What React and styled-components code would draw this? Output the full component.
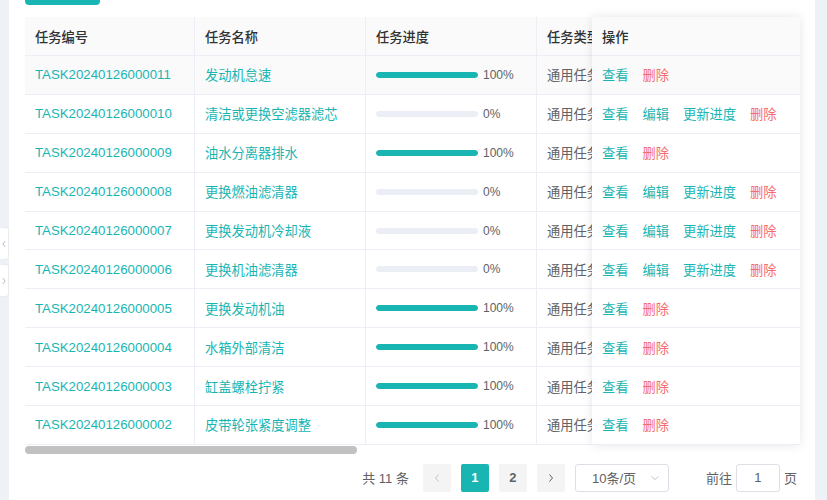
import React from "react";
import styled, { createGlobalStyle } from "styled-components";

const GlobalStyle = createGlobalStyle`
  html, body {
    margin: 0;
    padding: 0;
    background: #eef1f6;
    overflow: hidden;
  }
  body {
    font-family: "Liberation Sans", "Noto Sans CJK SC", sans-serif;
    font-size: 13.25px;
    color: #606266;
  }
`;

const TEAL = "#19b5b3";
const RED = "#f56c6c";
const LINE = "#ebeef5";

const Page = styled.div`
  position: relative;
  height: 500px;
  overflow: hidden;
  padding: 0 12px 0 9px;
`;

const Card = styled.div`
  background: #fff;
  height: 500px;
  padding: 0 15px 0 16px;
  box-sizing: border-box;
  display: flow-root;
  overflow: hidden;
`;

const TopButton = styled.div`
  width: 75px;
  height: 32px;
  margin-top: -27px;
  border-radius: 4px;
  background: ${TEAL};
`;

const TableBox = styled.div`
  margin-top: 12px;
  display: flex;
`;

const ScrollArea = styled.div`
  width: 567px;
  overflow: hidden;
  display: flex;
  flex-direction: column;
`;

const Grid = styled.div`
  width: 760px;
`;

const Row = styled.div`
  display: grid;
  grid-template-columns: ${(p) => p.$cols};
  height: ${(p) => (p.$head ? "39px" : "38.9px")};
  background: ${(p) => (p.$head || p.$hover ? "#fafafa" : "#fff")};
  border-bottom: 1px solid ${LINE};
  box-sizing: border-box;
`;

const Cell = styled.div`
  display: flex;
  align-items: center;
  padding: 0 10px;
  gap: ${(p) => p.$gap || 0}px;
  border-right: ${(p) => (p.$noBorder ? "none" : `1px solid ${LINE}`)};
  white-space: nowrap;
  overflow: hidden;
  color: ${(p) => (p.$head ? "#303133" : p.$teal ? TEAL : "#606266")};
  font-weight: ${(p) => (p.$head ? 500 : 400)};
`;

const ScrollBar = styled.div`
  height: 10px;
  padding: 1px 0;
  box-sizing: border-box;
  background: #fff;
`;

const Thumb = styled.div`
  width: 332px;
  height: 8px;
  border-radius: 4px;
  background: #c1c1c1;
`;

const Fixed = styled.div`
  width: 208px;
  align-self: flex-start;
  background: #fff;
  box-shadow: 0 0 10px rgba(0, 0, 0, 0.1);
  position: relative;
  z-index: 1;
`;

const Bar = styled.div`
  width: 102px;
  height: 6px;
  border-radius: 3px;
  background: #ebeef5;
  overflow: hidden;
`;

const Fill = styled.div`
  height: 100%;
  border-radius: 3px;
  background: ${TEAL};
`;

const Pct = styled.span`
  font-size: 12px;
  color: #606266;
`;

const Link = styled.span`
  color: ${(p) => (p.$danger ? RED : TEAL)};
  cursor: pointer;
`;

const Pager = styled.div`
  display: flex;
  justify-content: flex-end;
  align-items: center;
  margin-top: 9px;
  padding-right: 3px;
  height: 28px;
  font-size: 13px;
  color: #606266;
`;

const Total = styled.span`
  margin-right: 9px;
`;

const PageBtn = styled.div`
  width: 28px;
  height: 28px;
  margin: 0 5px;
  border-radius: 2px;
  display: flex;
  align-items: center;
  justify-content: center;
  font-weight: 700;
  font-size: 13px;
  background: ${(p) => (p.$active ? TEAL : "#f4f4f5")};
  color: ${(p) => (p.$active ? "#fff" : p.$disabled ? "#c0c4cc" : "#606266")};
`;

const Select = styled.div`
  width: 94px;
  height: 28px;
  margin-left: 5px;
  box-sizing: border-box;
  border: 1px solid #dcdfe6;
  border-radius: 3px;
  display: flex;
  align-items: center;
  padding: 0 8px 0 16px;
  justify-content: space-between;
  color: #606266;
`;

const Jump = styled.div`
  display: flex;
  align-items: center;
  margin-left: 37px;
  gap: 4px;
`;

const JumpInput = styled.div`
  width: 44px;
  height: 28px;
  box-sizing: border-box;
  border: 1px solid #dcdfe6;
  border-radius: 3px;
  display: flex;
  align-items: center;
  justify-content: center;
`;

const SideTab = styled.div`
  position: absolute;
  left: 0;
  top: ${(p) => p.$top}px;
  width: 8px;
  height: 31px;
  background: #fff;
  border-radius: 0 2px 2px 0;
  box-shadow: 0 0 2px rgba(0, 0, 0, 0.08);
  display: flex;
  align-items: center;
  justify-content: center;
`;

const Chevron = ({ dir = "right", size = 10, color = "#909399" }) => (
  <svg width={size} height={size} viewBox="0 0 10 10">
    <path
      d={
        dir === "right"
          ? "M3.5 1.5 L6.5 5 L3.5 8.5"
          : dir === "left"
          ? "M6.5 1.5 L3.5 5 L6.5 8.5"
          : "M1.5 3.5 L5 6.5 L8.5 3.5"
      }
      fill="none"
      stroke={color}
      strokeWidth="1"
    />
  </svg>
);

const tasks = [
  ["11", "发动机怠速", 100],
  ["10", "清洁或更换空滤器滤芯", 0],
  ["09", "油水分离器排水", 100],
  ["08", "更换燃油滤清器", 0],
  ["07", "更换发动机冷却液", 0],
  ["06", "更换机油滤清器", 0],
  ["05", "更换发动机油", 100],
  ["04", "水箱外部清洁", 100],
  ["03", "缸盖螺栓拧紧", 100],
  ["02", "皮带轮张紧度调整", 100],
];

const COLS = "170px 171px 171px 248px";

export default function App() {
  return (
    <Page>
      <GlobalStyle />
      <SideTab $top={228}>
        <Chevron dir="left" size={8} color="#a0a4ab" />
      </SideTab>
      <SideTab $top={265}>
        <Chevron dir="right" size={8} color="#a0a4ab" />
      </SideTab>
      <Card>
        <TopButton />
        <TableBox>
          <ScrollArea>
            <Grid>
              <Row $head $cols={COLS}>
                <Cell $head>任务编号</Cell>
                <Cell $head>任务名称</Cell>
                <Cell $head>任务进度</Cell>
                <Cell $head>任务类型</Cell>
              </Row>
              {tasks.map(([id, name, pct], i) => (
                <Row key={id} $cols={COLS} $hover={i === 0}>
                  <Cell $teal>TASK202401260000{id}</Cell>
                  <Cell $teal>{name}</Cell>
                  <Cell $gap={5}>
                    <Bar>
                      <Fill style={{ width: `${pct}%` }} />
                    </Bar>
                    <Pct>{pct}%</Pct>
                  </Cell>
                  <Cell>通用任务</Cell>
                </Row>
              ))}
            </Grid>
            <ScrollBar>
              <Thumb />
            </ScrollBar>
          </ScrollArea>
          <Fixed>
            <Row $head $cols="1fr">
              <Cell $head $noBorder>操作</Cell>
            </Row>
            {tasks.map(([id, , pct], i) => (
              <Row key={id} $cols="1fr" $hover={i === 0}>
                <Cell $noBorder $gap={14}>
                  <Link>查看</Link>
                  {pct === 0 && <Link>编辑</Link>}
                  {pct === 0 && <Link>更新进度</Link>}
                  <Link $danger>删除</Link>
                </Cell>
              </Row>
            ))}
          </Fixed>
        </TableBox>
        <Pager>
          <Total>共 11 条</Total>
          <PageBtn $disabled>
            <Chevron dir="left" color="#c0c4cc" />
          </PageBtn>
          <PageBtn $active>1</PageBtn>
          <PageBtn>2</PageBtn>
          <PageBtn>
            <Chevron dir="right" color="#606266" />
          </PageBtn>
          <Select>
            <span>10条/页</span>
            <Chevron dir="down" color="#c0c4cc" />
          </Select>
          <Jump>
            <span>前往</span>
            <JumpInput>1</JumpInput>
            <span>页</span>
          </Jump>
        </Pager>
      </Card>
    </Page>
  );
}
